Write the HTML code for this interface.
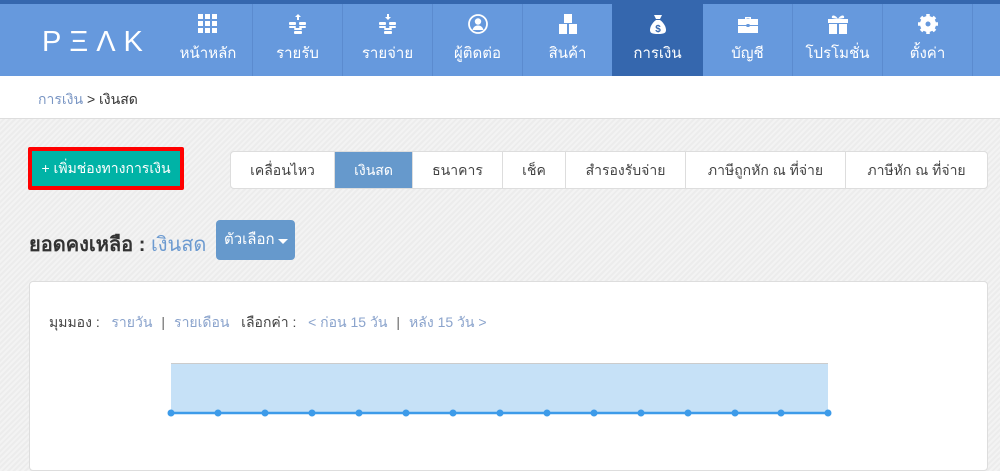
<!DOCTYPE html>
<html><head><meta charset="utf-8"><style>
*{margin:0;padding:0;box-sizing:border-box}
body{width:1000px;height:458px;overflow:hidden;font-family:"Liberation Sans","Noto Sans CJK SC",sans-serif;background:repeating-linear-gradient(135deg,#f3f3f3 0 2px,#ececec 2px 4px);position:relative}
.top{position:absolute;left:0;top:0;width:1000px;height:4px;background:#3567ae}
.nav{position:absolute;left:0;top:4px;width:1000px;height:72px;background:#6699dd}
.logo{position:absolute;left:42px;top:22px;color:#fff;font-size:29px;letter-spacing:8px;font-weight:300}
.tab{position:absolute;top:0;width:90px;height:72px;border-left:1px solid #5b8bcf;color:#fff;text-align:center}
.tab.act{background:#3567ae;border-left-color:#3567ae}
.tab svg{position:absolute;left:35px;top:10px}
.tab span{position:absolute;left:0;right:0;top:37px;font-size:15px}
.bc{position:absolute;left:0;top:76px;width:1000px;height:43px;background:#fff;border-bottom:1px solid #ddd;font-size:14px;padding:13px 0 0 38px;color:#333}
.bc a{color:#7a96c4}
.add{position:absolute;left:28px;top:147px;width:156px;height:43px;border:4px solid #f00;background:#00b3a6;color:#fff;font-size:14px;text-align:center;line-height:35px;border-radius:2px}
.seg{position:absolute;top:151px;height:38px;display:flex;left:230px;border:1px solid #ddd;border-radius:4px;background:#fff;overflow:hidden}
.seg div{height:36px;line-height:36px;text-align:center;font-size:14px;color:#444;border-left:1px solid #ddd}
.seg div:first-child{border-left:0}
.seg .on{background:#6699cc;color:#fff}
.title{position:absolute;left:29px;top:228px;font-size:20px;color:#333;font-weight:600}
.title b{color:#6c9ad0;font-weight:normal}
.opt{position:absolute;left:216px;top:220px;width:79px;height:40px;background:#6699cc;border-radius:4px;color:#fff;font-size:15px;line-height:40px;padding-left:8px}
.opt i{position:absolute;right:7px;top:19px;border:5px solid transparent;border-top-color:#fff;border-bottom:0}
.card{position:absolute;left:29px;top:281px;width:959px;height:190px;background:#fff;border:1px solid #ddd;border-radius:4px}
.view{position:absolute;left:49px;top:312px;font-size:14px;color:#444}
.view a{color:#8aa3cc}
.view .s{color:#666;margin:0 9px}
</style></head><body>
<div class="top"></div>
<div class="nav">
<div class="logo">PΞΛK</div>
<div class="tab" style="left:163px;border-left:0"><svg width="20" height="20" viewBox="0 0 20 20" fill="#fff"><rect x="0" y="0" width="5" height="5"/><rect x="7" y="0" width="5" height="5"/><rect x="14" y="0" width="5" height="5"/><rect x="0" y="7" width="5" height="5"/><rect x="7" y="7" width="5" height="5"/><rect x="14" y="7" width="5" height="5"/><rect x="0" y="14" width="5" height="5"/><rect x="7" y="14" width="5" height="5"/><rect x="14" y="14" width="5" height="5"/></svg><span>หน้าหลัก</span></div>
<div class="tab" style="left:252px"><svg width="20" height="20" viewBox="0 0 20 20" fill="#fff"><path d="M10 0l3 3h-2v3h-2V3H7z"/><rect x="1" y="8" width="7" height="3" rx="1"/><rect x="11" y="8" width="7" height="3" rx="1"/><rect x="1" y="12" width="7" height="2" rx="1"/><rect x="11" y="12" width="7" height="2" rx="1"/><rect x="6" y="14" width="8" height="2" rx="1"/><rect x="6" y="17" width="8" height="3" rx="1"/></svg><span>รายรับ</span></div>
<div class="tab" style="left:342px"><svg width="20" height="20" viewBox="0 0 20 20" fill="#fff"><path d="M10 6l3-3h-2V0H9v3H7z"/><rect x="1" y="8" width="7" height="3" rx="1"/><rect x="11" y="8" width="7" height="3" rx="1"/><rect x="1" y="12" width="7" height="2" rx="1"/><rect x="11" y="12" width="7" height="2" rx="1"/><rect x="6" y="14" width="8" height="2" rx="1"/><rect x="6" y="17" width="8" height="3" rx="1"/></svg><span>รายจ่าย</span></div>
<div class="tab" style="left:432px"><svg width="20" height="20" viewBox="0 0 20 20"><circle cx="10" cy="10" r="9" fill="none" stroke="#fff" stroke-width="1.8"/><circle cx="10" cy="7.5" r="3.2" fill="#fff"/><path d="M4.5 16c1-3.5 3-4.5 5.5-4.5s4.5 1 5.5 4.5z" fill="#fff"/></svg><span>ผู้ติดต่อ</span></div>
<div class="tab" style="left:522px"><svg width="20" height="20" viewBox="0 0 20 20" fill="#fff"><rect x="6" y="0" width="8" height="9"/><rect x="1" y="10" width="8" height="10"/><rect x="11" y="10" width="8" height="10"/></svg><span>สินค้า</span></div>
<div class="tab act" style="left:612px"><svg width="20" height="20" viewBox="0 0 20 20"><path d="M6 1h8l-2 4H8z" fill="#fff"/><path d="M8 6h4c4 3 6 7 6 10 0 3-2 4-8 4s-8-1-8-4c0-3 2-7 6-10z" fill="#fff"/><text x="10" y="18" font-size="10" text-anchor="middle" fill="#3567ae" font-weight="bold" font-family="Liberation Sans">$</text></svg><span>การเงิน</span></div>
<div class="tab" style="left:702px;border-left-color:#3567ae"><svg width="20" height="20" viewBox="0 0 20 20" fill="#fff"><path d="M7 3h6v2h-1.5V4.5h-3V5H7z"/><rect x="0" y="5" width="20" height="6"/><rect x="0" y="12" width="20" height="7"/><rect x="8.5" y="10" width="3" height="3" fill="#6699dd"/></svg><span>บัญชี</span></div>
<div class="tab" style="left:792px"><svg width="20" height="20" viewBox="0 0 20 20" fill="#fff"><rect x="0" y="5" width="20" height="4"/><rect x="1" y="10" width="8" height="10"/><rect x="11" y="10" width="8" height="10"/><path d="M10 5C7 0 3 1 4 4z M10 5c3-5 7-4 6-1z"/></svg><span>โปรโมชั่น</span></div>
<div class="tab" style="left:882px"><svg width="20" height="20" viewBox="0 0 20 20"><circle cx="10" cy="10" r="6" fill="none" stroke="#fff" stroke-width="4"/><g stroke="#fff" stroke-width="3.5"><line x1="10" y1="0" x2="10" y2="20"/><line x1="0" y1="10" x2="20" y2="10"/><line x1="3" y1="3" x2="17" y2="17"/><line x1="17" y1="3" x2="3" y2="17"/></g><circle cx="10" cy="10" r="2.5" fill="#6699dd"/></svg><span>ตั้งค่า</span></div>
<div class="tab" style="left:972px"></div>
</div>
<div class="bc"><a>การเงิน</a> &gt; เงินสด</div>
<div class="add">+ เพิ่มช่องทางการเงิน</div>
<div class="seg"><div style="width:103px">เคลื่อนไหว</div><div class="on" style="width:78px">เงินสด</div><div style="width:90px">ธนาคาร</div><div style="width:63px">เช็ค</div><div style="width:120px">สำรองรับจ่าย</div><div style="width:160px">ภาษีถูกหัก ณ ที่จ่าย</div><div style="width:142px">ภาษีหัก ณ ที่จ่าย</div></div>
<div class="title">ยอดคงเหลือ : <b>เงินสด</b></div>
<div class="opt">ตัวเลือก<i></i></div>
<div class="card"></div>
<div class="view">มุมมอง :&nbsp;&nbsp; <a>รายวัน</a><span class="s">|</span><a>รายเดือน</a>&nbsp;&nbsp; เลือกค่า :&nbsp;&nbsp; <a>&lt; ก่อน 15 วัน</a><span class="s">|</span><a>หลัง 15 วัน &gt;</a></div>
<svg style="position:absolute;left:0;top:0" width="1000" height="458">
<rect x="171" y="363" width="657" height="50" fill="#c6e1f7"/>
<line x1="171" y1="363.5" x2="828" y2="363.5" stroke="#ccc"/>
<line x1="171" y1="413" x2="828" y2="413" stroke="#3d9be9" stroke-width="2.5"/>
<g fill="#3d9be9">
<circle cx="171" cy="413" r="3.5"/><circle cx="218" cy="413" r="3.5"/><circle cx="265" cy="413" r="3.5"/><circle cx="312" cy="413" r="3.5"/><circle cx="359" cy="413" r="3.5"/><circle cx="406" cy="413" r="3.5"/><circle cx="453" cy="413" r="3.5"/><circle cx="500" cy="413" r="3.5"/><circle cx="547" cy="413" r="3.5"/><circle cx="594" cy="413" r="3.5"/><circle cx="641" cy="413" r="3.5"/><circle cx="688" cy="413" r="3.5"/><circle cx="735" cy="413" r="3.5"/><circle cx="781" cy="413" r="3.5"/><circle cx="828" cy="413" r="3.5"/>
</g></svg>
</body></html>
